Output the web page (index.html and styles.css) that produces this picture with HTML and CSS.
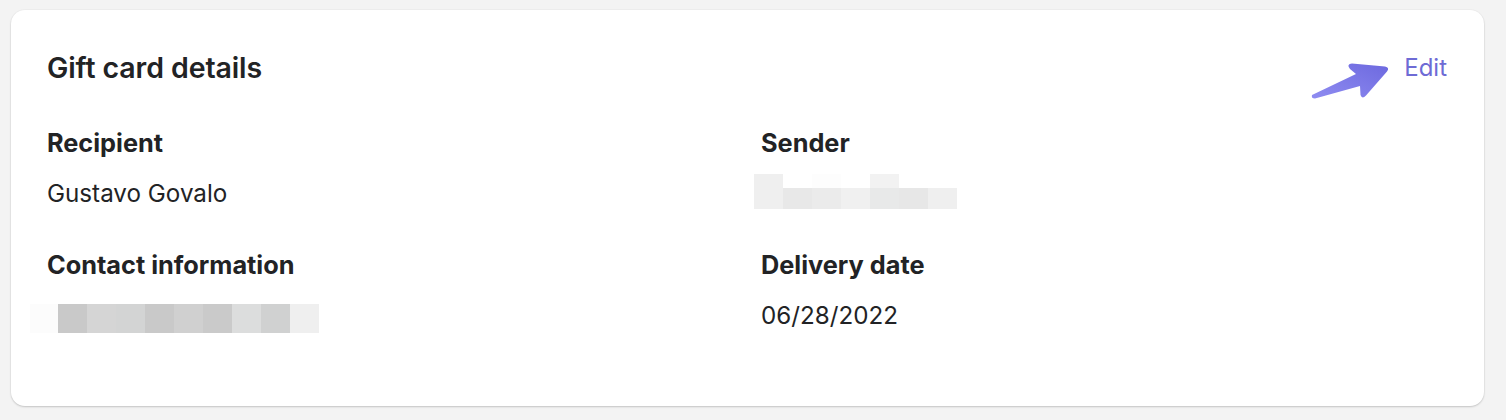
FILE: index.html
```html
<!DOCTYPE html>
<html lang="en">
<head>
<meta charset="utf-8">
<title>Gift card details</title>
<link rel="stylesheet" href="styles.css">
</head>
<body>
<section class="card">
  <header class="card-head">
    <h2 class="title">Gift card details</h2>
    <a class="edit" href="#">Edit</a>
  </header>
  <div class="grid">
    <div class="field">
      <h3 class="label">Recipient</h3>
      <p class="value">Gustavo Govalo</p>
    </div>
    <div class="field">
      <h3 class="label">Sender</h3>
      <div class="blur blur-sender">
        <span class="px tall s1"></span>
        <span class="px s2"></span>
        <span class="px tall s3"></span>
        <span class="px s4"></span>
        <span class="px tall s5"></span>
        <span class="px s6"></span>
        <span class="px s7"></span>
      </div>
    </div>
    <div class="field">
      <h3 class="label">Contact information</h3>
      <div class="blur blur-contact">
        <span class="px c0"></span>
        <span class="px c1"></span>
        <span class="px c2"></span>
        <span class="px c3"></span>
        <span class="px c4"></span>
        <span class="px c5"></span>
        <span class="px c6"></span>
        <span class="px c7"></span>
        <span class="px c8"></span>
        <span class="px c9"></span>
      </div>
    </div>
    <div class="field">
      <h3 class="label">Delivery date</h3>
      <p class="value">06/28/2022</p>
    </div>
  </div>
  <svg class="arrow" width="90" height="44" viewBox="1306 60 90 44" aria-hidden="true">
    <defs>
      <linearGradient id="ag" x1="0" y1="1" x2="1" y2="0">
        <stop offset="0" stop-color="#8f8cf1"/>
        <stop offset="1" stop-color="#6d69df"/>
      </linearGradient>
    </defs>
    <path d="M1312,95 L1356,74 L1350,69 Q1346,64 1352,63.5 L1385,66.5 Q1390,67.5 1387,71.5 L1366,95.5 Q1362,99.5 1360.5,95 L1360,86 L1315,98.5 Q1311,98.5 1312,95 Z" fill="url(#ag)"/>
  </svg>
</section>
</body>
</html>
```
FILE: styles.css
```css
* { box-sizing: border-box; }
html, body { margin: 0; }
body {
  background: #f3f3f3;
  padding: 10px 22px 14px 11px;
  font-family: Inter, "Noto Sans", "Liberation Sans", sans-serif;
  color: #222325;
  -webkit-font-smoothing: antialiased;
}
.card {
  position: relative;
  background: #fff;
  border-radius: 14px;
  height: 396px;
  padding: 41px 37px 0 36px;
  box-shadow: 0 1px 2px rgba(0,0,0,0.18), 0 0 0 1px rgba(0,0,0,0.02);
}
.card-head {
  display: flex;
  justify-content: space-between;
  align-items: center;
  height: 34px;
}
.title {
  margin: 0;
  font-size: 28.5px;
  line-height: 34px;
  font-weight: 600;
  letter-spacing: -0.1px;
}
.edit {
  font-size: 24px;
  line-height: 30px;
  color: #6e6bd5;
  text-decoration: none;
}
.grid {
  display: grid;
  grid-template-columns: 1fr 1fr;
  column-gap: 28px;
  row-gap: 41px;
  margin-top: 43px;
}
.label {
  margin: 0;
  font-size: 25.3px;
  line-height: 30px;
  font-weight: 700;
}
.value {
  margin: 21px 0 0;
  font-size: 24.2px;
  line-height: 30px;
}
.blur {
  display: flex;
  align-items: flex-end;
}
.px { display: block; width: 29px; }
.blur-sender { margin: 16px 0 0 -7px; height: 35px; }
.blur-sender .px { height: 21px; }
.blur-sender .px.tall { height: 35px; }
.s1 { background: #efefef; }
.s2 { background: #e8e8e8; }
.s3 { background: linear-gradient(#fdfdfd 0 14px, #ebebeb 14px); }
.s4 { background: #f0f0f0; }
.s5 { background: linear-gradient(#f2f2f2 0 14px, #e8e9e9 14px); }
.s6 { background: #e7e7e7; }
.s7 { background: #efefef; }
.blur-contact { margin: 24px 0 0 -17px; height: 29px; }
.blur-contact .px { height: 29px; }
.c0 { background: #fcfcfc; width: 28px; }
.c1 { background: #c9c9c9; }
.c2 { background: #d5d5d5; }
.c3 { background: #d3d4d4; }
.c4 { background: #c9c9c9; }
.c5 { background: #d0d0d0; }
.c6 { background: #cacaca; }
.c7 { background: #dcdddd; }
.c8 { background: #d0d1d1; }
.c9 { background: #efefef; }
.arrow {
  position: absolute;
  left: 1295px;
  top: 50px;
}
```
